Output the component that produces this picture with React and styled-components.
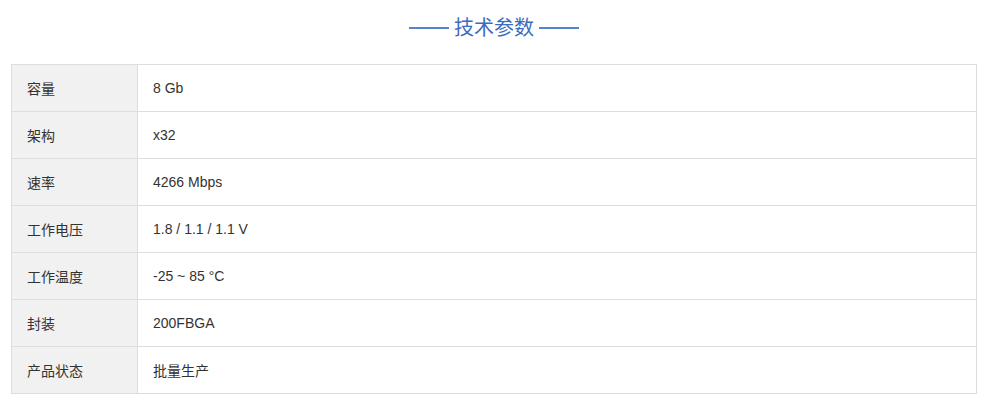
import React from "react";
import styled, { createGlobalStyle } from "styled-components";

const Global = createGlobalStyle`
  html, body { margin: 0; padding: 0; background: #fff; }
  body { font-family: "Liberation Sans", Arial, "Noto Sans CJK SC", sans-serif; }
`;

const Page = styled.div`
  padding: 0 12px 12px 11px;
`;

const Title = styled.h2`
  margin: 13px 0 23px;
  display: flex;
  align-items: center;
  justify-content: center;
  gap: 5px;
  font-family: "Noto Sans CJK SC", sans-serif;
  font-weight: 400;
  font-size: 20px;
  line-height: 28px;
  color: #3b6cc2;
`;

const Dash = styled.span`
  display: block;
  width: 40px;
  height: 2px;
  margin-top: 2px;
  background: #3b6cc2;
  opacity: 0.85;
`;

const Table = styled.div`
  border: 1px solid #dddddd;
  display: flex;
  flex-direction: column;
`;

const Row = styled.div`
  display: grid;
  grid-template-columns: 126px 1fr;
  height: 46px;
  border-bottom: ${(p) => (p.$last ? "none" : "1px solid #dddddd")};
`;

const Cell = styled.div`
  display: flex;
  align-items: center;
  padding-left: ${(p) => (p.$label ? "15px" : "15px")};
  padding-bottom: 1px;
  font-size: 14px;
  color: #333;
  font-family: "Liberation Sans", Arial, "Noto Sans CJK SC", sans-serif;
  background: ${(p) => (p.$label ? "#f1f1f1" : "#fff")};
  border-right: ${(p) => (p.$label ? "1px solid #dddddd" : "none")};
`;

const rows = [
  ["容量", "8 Gb"],
  ["架构", "x32"],
  ["速率", "4266 Mbps"],
  ["工作电压", "1.8 / 1.1 / 1.1 V"],
  ["工作温度", "-25 ~ 85 °C"],
  ["封装", "200FBGA"],
  ["产品状态", "批量生产"],
];

export default function App() {
  return (
    <Page>
      <Global />
      <Title>
        <Dash />
        <span>技术参数</span>
        <Dash />
      </Title>
      <Table>
        {rows.map(([k, v], i) => (
          <Row key={k} $last={i === rows.length - 1}>
            <Cell $label>{k}</Cell>
            <Cell>{v}</Cell>
          </Row>
        ))}
      </Table>
    </Page>
  );
}
